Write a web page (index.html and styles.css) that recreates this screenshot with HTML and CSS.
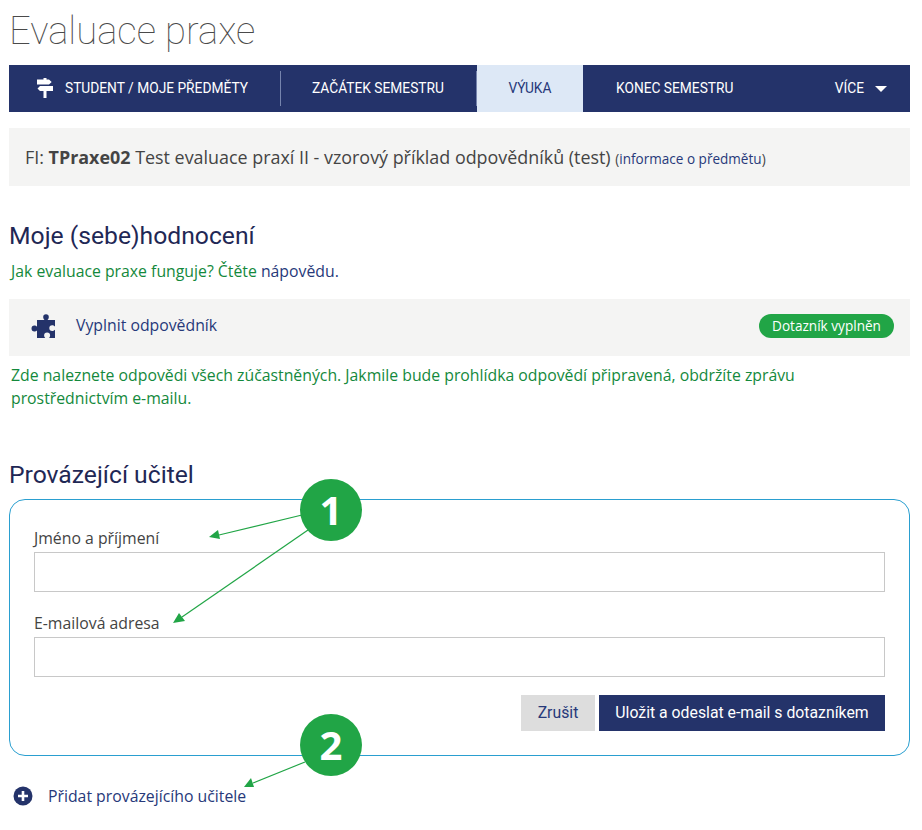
FILE: index.html
```html
<!DOCTYPE html>
<html lang="cs">
<head>
<meta charset="utf-8">
<title>Evaluace praxe</title>
<link rel="stylesheet" href="styles.css">
</head>
<body>
<div class="page">
  <h1 class="title">Evaluace praxe</h1>
  <nav class="nav">
    <a class="nav-item first">
      <svg class="sign" viewBox="0 0 16 20" width="16" height="20"><path d="M6.500 0h3v1.500H12L14.700 4 12 6.500H0v-5h6.500z M3 8h13v5H9.500v7h-3v-7H3L.5 10.500z" fill="#fff"/></svg>
      <span>STUDENT / MOJE PŘEDMĚTY</span>
    </a>
    <a class="nav-item second">ZAČÁTEK SEMESTRU</a>
    <a class="nav-item active">VÝUKA</a>
    <a class="nav-item fourth">KONEC SEMESTRU</a>
    <a class="nav-item more">VÍCE<span class="caret"></span></a>
  </nav>
  <div class="course">FI: <b>TPraxe02</b> Test evaluace praxí II - vzorový příklad odpovědníků (test) <small>(<a>informace o předmětu</a>)</small></div>

  <h2 class="head-self">Moje (sebe)hodnocení</h2>
  <p class="green help">Jak evaluace praxe funguje? Čtěte <a>nápovědu.</a></p>
  <div class="row">
    <svg class="puzzle" viewBox="0 0 26 24" width="26" height="24"><path d="M10 6h4.500c-1-1-1.300-2-1.300-3a2.800 2.800 0 0 1 5.600 0c0 1-.3 2-1.300 3H25v6.500c-1-.9-1.800-1.300-2.800-1.300a2.900 2.900 0 0 0 0 5.800c1 0 1.800-.4 2.800-1.300V24h-6c.8-1 1.100-1.800 1.100-2.600a3 3 0 0 0-6 0c0 .8.300 1.600 1.100 2.600H7v-7.500c-1 .8-1.700 1.100-2.500 1.100a3 3 0 0 1 0-6c.8 0 1.500.3 2.500 1.100V6z" fill="#24336a"/></svg>
    <a class="row-link">Vyplnit odpovědník</a>
    <span class="pill">Dotazník vyplněn</span>
  </div>
  <p class="green note">Zde naleznete odpovědi všech zúčastněných. Jakmile bude prohlídka odpovědí připravená, obdržíte zprávu prostřednictvím e-mailu.</p>

  <h2 class="head-teacher">Provázející učitel</h2>
  <form class="box">
    <label class="lab lab-first">Jméno a příjmení</label>
    <input class="inp" type="text">
    <label class="lab lab-second">E-mailová adresa</label>
    <input class="inp inp-second" type="text">
    <div class="btns">
      <button type="button" class="btn cancel">Zrušit</button>
      <button type="button" class="btn save">Uložit a odeslat e-mail s dotazníkem</button>
    </div>
  </form>
  <div class="add">
    <svg class="plus" viewBox="0 0 20 20" width="20" height="20"><circle cx="10" cy="10" r="9.500" fill="#24336a"/><path d="M8.700 5h2.600v3.700H15v2.600h-3.700V15H8.700v-3.700H5V8.700h3.700z" fill="#fff"/></svg>
    <a>Přidat provázejícího učitele</a>
  </div>
</div>

<svg class="arrows" viewBox="0 0 922 830" width="922" height="830">
  <g stroke="#21a546" stroke-width="1.200" fill="none">
    <path d="M302 515 219 535"/>
    <path d="M308 530 182 617"/>
    <path d="M305 762 253 783"/>
  </g>
  <g fill="#21a546">
    <path d="M209 537 218 530 220 539z"/>
    <path d="M173 623 179 613 185 621z"/>
    <path d="M244 787 251 778 254 787z"/>
  </g>
</svg>
<div class="mark mark-one">1</div>
<div class="mark mark-two">2</div>
</body>
</html>
```
FILE: styles.css
```css
* { box-sizing: border-box; }
html, body { margin: 0; padding: 0; background: #fff; }
body { width: 922px; height: 830px; position: relative; overflow: hidden; font-family: "Open Sans", sans-serif; color: #444; }
.page { padding: 0 12px 0 9px; }
a { color: #27397a; }
.title { margin: 0; height: 65px; padding: 8px 0 0 0; font: 100 38.2px/46px Roboto, sans-serif; color: #4a4a4a; }
.nav { display: flex; height: 47px; background: #24336a; font: 400 13.75px/47px Roboto, sans-serif; color: #fff; }
.nav-item { position: relative; display: flex; align-items: center; padding: 0 32px; color: #fff; }
.nav-item.first { width: 272px; padding: 0 0 0 28px; }
.nav-item.first::after, .nav-item.second::after { content: ""; position: absolute; right: 0; top: 6px; bottom: 6px; width: 1px; background: #7684ad; }
.nav-item.second { padding: 0 0 0 31px; width: 196px; white-space: nowrap; }
.sign { margin-right: 12px; margin-top: -1px; }
.nav-item.active { background: #dde8f6; color: #27397a; width: 106px; justify-content: center; padding: 0; }
.nav-item.fourth { padding-left: 33px; }
.nav-item.more { margin-left: auto; padding: 0 23px 0 0; }
.caret { margin-left: 11px; border-left: 6px solid transparent; border-right: 6px solid transparent; border-top: 6px solid #fff; }
.course { margin-top: 16px; height: 58px; background: #f4f4f3; padding-left: 16px; font-size: 17.9px; line-height: 58px; color: #444; white-space: nowrap; }
.course b { font-weight: 700; }
.course small { font-size: 13.55px; }
.head-self, .head-teacher { margin: 0; font: 400 24.7px/30px Roboto, sans-serif; color: #1f2855; }
.head-self { margin-top: 35px; }
.green { margin: 0; color: #14893c; font-size: 15.8px; line-height: 23px; }
.help { margin-top: 9px; padding-left: 2px; }
.row { margin-top: 16px; height: 57px; background: #f4f4f3; display: flex; align-items: center; padding: 0 16px 0 21px; font-size: 15.8px; line-height: 22px; }
.puzzle { margin-top: -4px; }
.row-link { margin-left: 20px; margin-top: -5px; }
.pill { margin-left: auto; margin-top: -4px; width: 135px; height: 24px; border-radius: 12px; background: #21a546; color: #fff; font-size: 13.6px; line-height: 24px; text-align: center; }
.note { margin-top: 8px; padding: 0 2px; width: 860px; }
.head-teacher { margin-top: 50px; }
.box { margin-top: 9px; height: 257px; border: 1px solid #2a9fd0; border-radius: 16px; padding: 0 24px; display: flex; flex-direction: column; }
.lab { font-size: 15.8px; line-height: 20px; color: #444; }
.lab-first { margin-top: 28px; }
.lab-second { margin-top: 21px; }
.inp { margin-top: 4px; height: 40px; border: 1px solid #c8c8c8; background: #fff; width: 851px; padding: 0; }
.btns { margin-top: 18px; display: flex; justify-content: flex-end; gap: 4px; }
.btn { height: 36px; border: 0; font: 400 15.8px/36px Roboto, sans-serif; padding: 0; }
.cancel { width: 74px; background: #ddd; color: #27397a; }
.save { width: 286px; background: #24336a; color: #fff; }
.add { margin-top: 29px; margin-left: 4px; display: flex; align-items: center; font-size: 15.8px; line-height: 22px; }
.plus { margin-right: 15px; }
.arrows { position: absolute; left: 0; top: 0; pointer-events: none; }
.mark { position: absolute; left: 300px; width: 62px; height: 62px; border-radius: 50%; background: #21a546; color: #fff; font: 700 40px/62px "Open Sans", sans-serif; text-align: center; }
.mark-one { top: 479px; }
.mark-two { top: 714px; }
```
